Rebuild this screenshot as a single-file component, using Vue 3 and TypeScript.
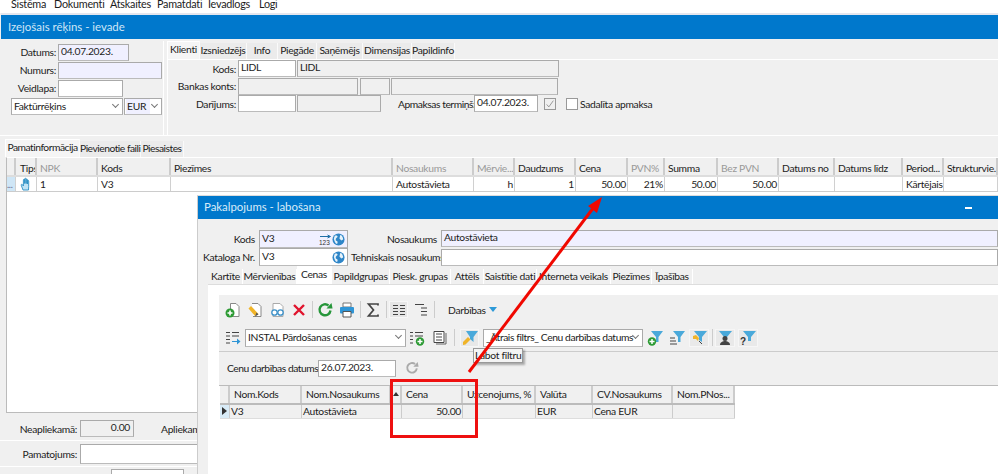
<script setup lang="ts">
type Col = { t: string; w: number; dim?: boolean; v?: string; r?: boolean }
const menu = [['Sistēma', 43], ['Dokumenti', 56], ['Atskaites', 47], ['Pamatdati', 51], ['Ievadlogs', 51], ['Logi', 30]] as const
const topTabs = [['Klienti', 33], ['Izsniedzējs', 47], ['Info', 31], ['Piegāde', 39], ['Saņēmējs', 46], ['Dimensijas', 49], ['Papildinfo', 43]] as const
const midTabs = [['Pamatinformācija', 75], ['Pievienotie faili', 61], ['Piesaistes', 43]] as const
const dlgTabs = [['Kartīte', 34], ['Mērvienības', 54], ['Cenas', 35], ['Papildgrupas', 58], ['Piesk. grupas', 61], ['Attēls', 33], ['Saistītie dati', 53], ['Interneta veikals', 74], ['Piezīmes', 41], ['Īpašības', 41]] as const
const mainCols: Col[] = [
  { t: 'NPK', w: 61, dim: true, v: '1' },
  { t: 'Kods', w: 73, v: 'V3' },
  { t: 'Piezīmes', w: 222, v: '' },
  { t: 'Nosaukums', w: 81, dim: true, v: 'Autostāvieta' },
  { t: 'Mērvie...', w: 41, dim: true, v: 'h', r: true },
  { t: 'Daudzums', w: 61, v: '1', r: true },
  { t: 'Cena', w: 52, v: '50.00', r: true },
  { t: 'PVN%', w: 37, dim: true, v: '21%', r: true },
  { t: 'Summa', w: 53, v: '50.00', r: true },
  { t: 'Bez PVN', w: 61, dim: true, v: '50.00', r: true },
  { t: 'Datums no', w: 56, v: '' },
  { t: 'Datums līdz', w: 68, v: '' },
  { t: 'Period...', w: 41, v: 'Kārtējais', r: true },
  { t: 'Strukturvie...', w: 54, v: '' },
]
const priceCols: Col[] = [
  { t: 'Nom.Kods', w: 72, v: 'V3' },
  { t: 'Nom.Nosaukums', w: 89, v: 'Autostāvieta' },
  { t: '', w: 11, v: '' },
  { t: 'Cena', w: 61, v: '50.00', r: true },
  { t: 'Uzcenojums, %', w: 73, v: '' },
  { t: 'Valūta', w: 57, v: 'EUR' },
  { t: 'CV.Nosaukums', w: 80, v: 'Cena EUR' },
  { t: 'Nom.PNos...', w: 62, v: '' },
]
const mainTemplate = '9px 21px ' + mainCols.map(c => c.w + 'px').join(' ')
const priceTemplate = '10px ' + priceCols.map(c => c.w + 'px').join(' ')
</script>

<template>
  <div class="app">
    <nav class="menubar"><span v-for="m in menu" :key="m[0]" :style="{ width: m[1] + 'px' }">{{ m[0] }}</span></nav>
    <header class="title">Izejošais rēķins - ievade</header>

    <section class="head">
      <div class="left-form">
        <label class="lbl">Datums:</label><div class="fld lav w71">04.07.2023.</div>
        <label class="lbl">Numurs:</label><div class="fld lav w104"></div>
        <label class="lbl">Veidlapa:</label><div class="fld w65"></div>
        <div class="selects">
          <div class="fld sel wsel">Faktūrrēķins<i class="chev"></i></div>
          <div class="fld sel weur"><b>EUR</b><i class="chev"></i></div>
        </div>
      </div>
      <div class="client">
        <div class="tabs top-tabs">
          <span v-for="(t, i) in topTabs" :key="t[0]" class="tab" :class="{ on: i === 0 }" :style="{ width: t[1] + 'px' }">{{ t[0] }}</span>
        </div>
        <div class="client-body">
          <div class="crow"><label class="lbl cl">Kods:</label><div class="fld w58">LIDL</div><div class="fld gray w262">LIDL</div></div>
          <div class="crow"><label class="lbl cl">Bankas konts:</label><div class="fld gray w120"></div><div class="fld gray w30 ml2"></div><div class="fld gray w167"></div></div>
          <div class="crow"><label class="lbl cl">Darījums:</label><div class="fld w58"></div><div class="fld gray w84"></div>
            <label class="lbl term">Apmaksas termiņš:</label><div class="fld w64">04.07.2023.</div>
            <span class="check on"><svg viewBox="0 0 12 12" width="10" height="10"><path d="M2 6.500l2.600 3L10 2" fill="none" stroke="#888" stroke-width="1"/></svg></span>
            <span class="check plain"></span><span class="chk-l">Sadalīta apmaksa</span>
          </div>
        </div>
      </div>
    </section>

    <div class="tabs mid-tabs">
      <span v-for="(t, i) in midTabs" :key="t[0]" class="tab" :class="{ on: i === 0 }" :style="{ width: t[1] + 'px' }">{{ t[0] }}</span>
    </div>

    <section class="main-grid">
      <div class="grow hdr" :style="{ gridTemplateColumns: mainTemplate }">
        <span class="gc"></span><span class="gc tips">Tips</span>
        <span v-for="c in mainCols" :key="c.t" class="gc" :class="{ dim: c.dim }">{{ c.t }}</span>
      </div>
      <div class="grow rowd" :style="{ gridTemplateColumns: mainTemplate }">
        <span class="gc mark">...</span>
        <span class="gc hand"><svg viewBox="0 0 12 14" width="12" height="14"><path d="M3 13L1.200 8.200c-.3-.9.8-1.300 1.300-.5L3.400 9V3c0-1 1.300-1 1.300 0V6.500V2c0-1 1.400-1 1.400 0v4.500V2.700c0-1 1.300-1 1.300 0V7V4c0-1 1.300-1 1.300 0v5.500L8.500 13z" fill="#bfe3f5" stroke="#2b8fc4" stroke-width=".9"/></svg></span>
        <span v-for="c in mainCols" :key="c.t" class="gc" :class="{ r: c.r }">{{ c.v }}</span>
      </div>
    </section>

    <section class="bottom">
      <div class="brow one">
        <label class="lbl l77">Neapliekamā:</label><div class="fld gray num">0.00</div><label class="lbl apl">Apliekamā</label>
      </div>
      <div class="brow two"><label class="lbl l77">Pamatojums:</label><div class="fld w118h"></div></div>
      <div class="brow three"><div class="fld w73"></div></div>
    </section>

    <!-- floating window over the form -->
    <section class="dialog">
      <header class="dlg-title"><span>Pakalpojums - labošana</span><i class="min"></i></header>
      <div class="dlg-form">
        <div class="drow r1">
          <label class="lbl d58">Kods</label>
          <div class="fld lav dk">V3
            <svg class="i123" viewBox="0 0 12 12" width="12" height="12"><path d="M1 2.500h10M8.500 1l3 1.500-3 1.500" fill="none" stroke="#1f6fa8" stroke-width="1"/><text x="0" y="11" font-size="6.500" font-family="Liberation Sans" fill="#333">123</text></svg>
            <svg class="globe" viewBox="0 0 14 14" width="13" height="13"><circle cx="7" cy="7" r="6.500" fill="#2f86c8"/><path d="M3 3c2-1 3 0 3 1s-2 1-2 3 2 1 2 3-1 2-2 1-2-4-2-5zM9 2c2 1 3 3 3 5l-2 1-2-2z" fill="#e6f2fa"/></svg>
          </div>
          <label class="lbl nos">Nosaukums</label><div class="fld lav dn">Autostāvieta</div>
        </div>
        <div class="drow r2">
          <label class="lbl d58">Kataloga Nr.</label>
          <div class="fld dk">V3
            <svg class="globe" viewBox="0 0 14 14" width="13" height="13"><circle cx="7" cy="7" r="6.500" fill="#2f86c8"/><path d="M3 3c2-1 3 0 3 1s-2 1-2 3 2 1 2 3-1 2-2 1-2-4-2-5zM9 2c2 1 3 3 3 5l-2 1-2-2z" fill="#e6f2fa"/></svg>
          </div>
          <label class="lbl nos">Tehniskais nosaukums</label><div class="fld dn"></div>
        </div>
      </div>
      <div class="tabs dlg-tabs">
        <span v-for="(t, i) in dlgTabs" :key="t[0]" class="tab" :class="{ onw: i === 2 }" :style="{ width: t[1] + 'px' }">{{ t[0] }}</span>
      </div>
      <div class="dlg-page">
        <div class="price-panel">
          <div class="tb tb1">
            <svg class="ic" viewBox="0 0 16 16"><path d="M5.500 8V1.500h5.500l3 3v10H8" fill="#fff" stroke="#888"/><circle cx="5" cy="11" r="4.500" fill="#2e9b35"/><path d="M5 8.500v5M2.500 11h5" stroke="#fff" stroke-width="1.600"/></svg>
            <svg class="ic" viewBox="0 0 16 16"><path d="M5 1.500h6l3 3v10H6" fill="#fff" stroke="#888"/><path d="M1.500 6.500l2.500-2.500 7.500 8-3.500 2z" fill="#f0b429"/><path d="M8 14.500l3.500-2-2-2z" fill="#555"/></svg>
            <svg class="ic" viewBox="0 0 16 16"><path d="M4 1.500h7l3 3v10H4z" fill="#fff" stroke="#aaa"/><circle cx="5.500" cy="10.500" r="2.700" fill="#fff" stroke="#3a8fc7" stroke-width="1.300"/><circle cx="11.500" cy="10.500" r="2.700" fill="#fff" stroke="#3a8fc7" stroke-width="1.300"/></svg>
            <svg class="ic" viewBox="0 0 16 16"><path d="M3 3l10 10M13 3L3 13" stroke="#e0142d" stroke-width="2.400"/></svg>
            <i class="sep"></i>
            <svg class="ic" viewBox="0 0 16 16"><path d="M13.500 8.500A5.500 5.500 0 1 1 11.500 3.500" fill="none" stroke="#26963a" stroke-width="2.400"/><path d="M9.500 6.500h6l-1-5.500z" fill="#26963a"/></svg>
            <svg class="ic" viewBox="0 0 16 16"><path d="M4 1h8v4H4z" fill="#fff" stroke="#777"/><rect x="1" y="5" width="14" height="6.500" rx="1" fill="#2f95d6"/><path d="M4 9.500h8V15H4z" fill="#fff" stroke="#555"/></svg>
            <i class="sep"></i>
            <svg class="ic" viewBox="0 0 16 16"><path d="M13 3.500V2H3.500L8.500 8l-5 6H13v-1.500" fill="none" stroke="#444" stroke-width="1.700"/></svg>
            <i class="sep"></i>
            <span class="tbtn"><svg viewBox="0 0 14 12" width="14" height="12"><path d="M1 1.500h5M8 1.500h5M1 4.500h5M8 4.500h5M1 7.500h5M8 7.500h5M1 10.500h5M8 10.500h5" stroke="#444"/></svg></span>
            <svg class="ic" viewBox="0 0 16 16"><path d="M2 2.500h9M8 6h6M8 9.500h6M8 13h6" stroke="#444" stroke-width="1.200"/></svg>
            <i class="sep"></i>
            <span class="act">Darbības</span><i class="tri"></i>
          </div>
          <div class="tb tb2">
            <svg class="ic" viewBox="0 0 16 16"><path d="M1 2.500h4M7 2.500h7M1 6h4M7 6h7M1 9.500h4M1 13h4" stroke="#444"/><path d="M7 11h5V8.500l3.500 3-3.500 3V12H7z" fill="#2f95d6"/></svg>
            <div class="fld sel s161">INSTAL Pārdošanas cenas<i class="chev"></i></div>
            <svg class="ic gap-a" viewBox="0 0 16 16"><path d="M1 2.500h3M6 2.500h8M1 6h3M6 6h8M1 9.500h3M1 13h3" stroke="#444"/><circle cx="11" cy="11.500" r="4.200" fill="#2e9b35"/><path d="M11 9v5M8.500 11.500h5" stroke="#fff" stroke-width="1.500"/></svg>
            <svg class="ic" viewBox="0 0 16 16"><path d="M2 1.500h10v11H2z" fill="#fff" stroke="#444"/><path d="M4 4h6M4 7h6M4 10h6" stroke="#444"/><path d="M14 3v11H4" fill="none" stroke="#666"/></svg>
            <i class="sep s2"></i>
            <span class="fbtn">
              <svg viewBox="0 0 16 16" width="16" height="16"><path d="M4 1h12l-4.500 6v5L8 9V7z" fill="#4aa9da"/><path d="M1 12l5-5 2.500 2.500-5 5L1 15z" fill="#f0b429"/></svg>
            </span>
            <div class="fld sel s160">_Ātrais filtrs_ Cenu darbības datums<i class="chev"></i></div>
            <svg class="ic f1" viewBox="0 0 16 16"><path d="M4 1h12l-4.500 6v5H9V7z" fill="#4aa9da"/><circle cx="5" cy="11.500" r="4.200" fill="#2e9b35"/><path d="M5 9v5M2.500 11.500h5" stroke="#fff" stroke-width="1.500"/></svg>
            <svg class="ic f2" viewBox="0 0 16 16"><path d="M4 1h12l-4.500 6v5H9V7z" fill="#4aa9da"/><path d="M1 8h5M1 11h6M1 14h7" stroke="#444"/></svg>
            <span class="tfb"><svg viewBox="0 0 16 16" width="16" height="16"><path d="M3 1h13l-5 6v5l-3-2V7z" fill="#4aa9da"/><path d="M2 6l3-1 3 3-1 3-2-2-3 0z" fill="#f0b429"/><path d="M8 11l3 3" stroke="#444"/></svg></span>
            <i class="sep s3"></i>
            <span class="tfb"><svg viewBox="0 0 16 16" width="16" height="16"><path d="M2 1h13l-5 6H7z" fill="#4aa9da"/><circle cx="8" cy="8.500" r="2.500" fill="#444"/><path d="M3 15c0-3 3-4 5-4s5 1 5 4z" fill="#444"/></svg></span>
            <span class="tfb"><svg viewBox="0 0 16 16" width="16" height="16"><path d="M3 1h13l-5 6v4H8V7z" fill="#4aa9da"/><text x="0" y="15" font-size="10" font-family="Liberation Sans" font-weight="700" fill="#333">?</text></svg></span>
          </div>
          <div class="date-row">
            <label class="lbl dl">Cenu darbības datums</label>
            <div class="fld w78">26.07.2023.</div>
            <svg class="ref" viewBox="0 0 16 16" width="14" height="14"><path d="M13.500 8.500A5.500 5.500 0 1 1 11.500 3.500" fill="none" stroke="#aaa" stroke-width="2.200"/><path d="M9.500 6.500h6l-1-5.500z" fill="#aaa"/></svg>
          </div>
        </div>
        <div class="price-grid">
          <div class="pwrap">
            <div class="prow phdr" :style="{ gridTemplateColumns: priceTemplate }">
              <span class="pc"></span>
              <span v-for="(c, i) in priceCols" :key="i" class="pc"><i v-if="i === 2" class="sort"></i>{{ c.t }}</span>
            </div>
            <div class="prow pdata" :style="{ gridTemplateColumns: priceTemplate }">
              <span class="pc pmark"><i class="rowtri"></i></span>
              <span v-for="(c, i) in priceCols" :key="i" class="pc" :class="{ r: c.r }">{{ c.v }}</span>
            </div>
          </div>
        </div>
      </div>
    </section>

    <div class="tooltip">Labot filtru</div>

    <!-- annotation drawn on top of the screenshot -->
    <div class="red-box"></div>
    <svg class="arrow" viewBox="0 0 998 474" width="998" height="474">
      <path d="M469 372L594 207" stroke="#f00800" stroke-width="3" fill="none"/>
      <path d="M602 197L597 213 588 206z" fill="#f00800"/>
    </svg>
  </div>
</template>

<style>
html, body { margin: 0; background: #f0f0f0; overflow: hidden; }
</style>

<style scoped>
.app { position: relative; width: 998px; height: 474px; overflow: hidden; background: #f0f0f0; color: #1c1c1c; font: 10.3px/14px Lato, "Liberation Sans", sans-serif; letter-spacing: -.3px; }
.app * { box-sizing: border-box; }
.menubar { height: 13px; background: #fff; display: flex; padding-left: 11px; line-height: 8px; overflow: hidden; font-size: 10.8px; letter-spacing: -.25px; }
.menubar span { flex: none; }
.title { height: 26px; margin-left: 1px; border-top: 2px solid #e4e6ee; background: #0078cc; background-clip: padding-box; color: #cfe6f6; padding-left: 7px; font-size: 11.4px; line-height: 23px; letter-spacing: 0; }
.lbl { text-align: right; white-space: nowrap; }
.fld { height: 17px; border: 1px solid #aaa; border-bottom-color: #bbb; background: #fff; padding: 0 0 0 2px; line-height: 13px; white-space: nowrap; overflow: hidden; position: relative; flex: none; }
.lav { background: #f0f0ff; }
.gray { background: #f0f0f0; }
.head { height: 97px; display: flex; border-bottom: 1px solid #fff; }
.left-form { width: 163px; display: grid; grid-template-columns: 56px 1fr; column-gap: 2px; grid-auto-rows: 18px; padding-top: 5px; align-content: start; }
.left-form .lbl { line-height: 17px; }
.w71 { width: 71px; } .w104 { width: 104px; } .w65 { width: 65px; }
.selects { grid-column: 1 / 3; display: flex; padding-left: 11px; gap: 1px; }
.sel { padding-left: 2px; line-height: 14px; }
.wsel { width: 112px; } .weur { width: 38px; }
.weur b { font-weight: 400; background: #f0f0ff; display: inline-block; width: 24px; margin-left: -1px; padding-left: 1px; height: 15px; }
.chev { position: absolute; right: 4px; top: 3px; width: 5px; height: 5px; border-right: 1px solid #777; border-bottom: 1px solid #777; transform: rotate(45deg); }
.client { flex: 1; border-left: 1px solid #fff; margin-top: 2px; padding-left: 3px; display: flex; flex-direction: column; }
.tabs { display: flex; align-items: flex-end; }
.tab { height: 16px; background: #ebebeb; border-right: 1px solid #fafafa; text-align: center; line-height: 15px; white-space: nowrap; flex: none; }
.tab.on { height: 18px; background: #f5f5f5; border-top: 1px solid #fff; border-left: 1px solid #fff; }
.top-tabs { height: 18px; }
.client-body { flex: 1; border-top: 1px solid #fff; border-left: 1px solid #fff; }
.crow { display: flex; height: 17.500px; align-items: center; }
.cl { width: 68px; margin-right: 2px; }
.w58 { width: 58px; } .w262 { width: 262px; margin-left: 1px; } .w120 { width: 120px; } .w30 { width: 30px; margin-right: 1px; } .ml2 { margin-left: 2px; } .w167 { width: 167px; } .w84 { width: 84px; margin-left: 1px; } .w64 { width: 64px; height: 17px; }
.term { margin-left: 17px; width: 74px; margin-right: 2px; letter-spacing: -.45px; }
.check { width: 12px; height: 12px; border: 1px solid #999; flex: none; display: flex; align-items: center; justify-content: center; }
.check.on { margin-left: 6px; }
.check.plain { margin-left: 10px; background: #fff; }
.chk-l { margin-left: 2px; }
.mid-tabs { height: 21px; padding-left: 5px; letter-spacing: -.5px; }
.mid-tabs .tab { height: 16px; }
.mid-tabs .tab.on { height: 18px; }
.main-grid { height: 256px; margin-left: 6px; border-top: 1px solid #fff; border-left: 1px solid #bbb; border-bottom: 1px solid #bbb; background: #fff; }
.grow { display: grid; }
.hdr { height: 19px; background: #f0f0f0; border-bottom: 2px solid #ddd; }
.rowd { height: 15px; border-bottom: 1px solid #ccc; }
.gc { padding: 0 3px; white-space: nowrap; overflow: hidden; border-right: 1px solid #d0d0d0; line-height: 15px; }
.hdr .gc { line-height: 20px; border-right: 2px solid #ccc; }
.gc.tips { padding: 0 0 0 4px; }
.gc.dim { color: #999; }
.gc.r { text-align: right; padding-right: 1px; }
.gc.mark { background: #cfe6f6; color: #668; padding: 0; font-size: 9px; line-height: 16px; }
.gc.hand { padding: 0 0 0 4px; line-height: 0; }
.brow { display: flex; align-items: center; }
.one { height: 28px; border-bottom: 1px solid #fff; width: 197px; overflow: hidden; padding-top: 4px; }
.two { height: 26px; border-bottom: 1px solid #fff; width: 197px; }
.three { height: 10px; padding-left: 111px; align-items: flex-start; padding-top: 2px; }
.l77 { width: 77px; margin-right: 3px; flex: none; }
.num { width: 54px; text-align: right; padding-right: 3px; margin-right: 27px; }
.apl { flex: none; }
.w118h { width: 118px; height: 20px; }
.w73 { width: 73px; }
.dialog { position: absolute; left: 197px; top: 195px; width: 801px; height: 279px; background: #f0f0f0; border-left: 1px solid #ccc; border-top: 1px solid #ddd; display: flex; flex-direction: column; }
.dlg-title { height: 23px; background: #0078cc; color: #d9ecf9; font-size: 11.4px; line-height: 22px; padding-left: 6px; position: relative; flex: none; letter-spacing: 0; }
.min { position: absolute; right: 26px; top: 11px; width: 7px; height: 1.500px; background: #fff; }
.dlg-form { height: 49px; padding-top: 10px; flex: none; }
.drow { display: flex; align-items: center; }
.r1 { height: 19px; } .r2 { height: 18px; }
.d58 { width: 57px; margin-right: 4px; flex: none; }
.dk { width: 89px; height: 18px; line-height: 14px; }
.nos { width: 86px; margin: 0 4px 0 3px; flex: none; }
.dn { flex: 1; height: 17px; }
.i123 { position: absolute; left: 59px; top: 3px; letter-spacing: 0; }
.globe { position: absolute; right: 2px; top: 2px; }
.dlg-tabs { height: 17px; padding-left: 11px; flex: none; margin-top: -1px; }
.dlg-tabs .tab { background: #f0f0f0; border-right: 1px solid #fff; height: 15px; line-height: 14px; }
.dlg-tabs .tab.onw { background: #fff; height: 18px; line-height: 17px; }
.dlg-page { flex: 1; margin-left: 10px; background: #fff; border-top: 1px solid #ddd; padding: 10px 0 0 11px; display: flex; flex-direction: column; }
.price-panel { height: 90px; background: #f0f0f0; flex: none; }
.tb { display: flex; align-items: center; }
.tb1 { height: 29px; padding: 0 0 0 6px; }
.tb2 { height: 28px; padding: 0 0 0 6px; border-bottom: 1px solid #ccc; }
.ic { width: 16px; height: 16px; flex: none; margin-right: 6px; }
.sep { width: 1px; height: 17px; background: #ccc; margin: 0 4px 0 -1px; flex: none; }
.tbtn { width: 19px; height: 17px; background: #e6e6e6; border: 1px solid #f6f6f6; display: flex; align-items: center; justify-content: center; margin: 0 5px 0 -2px; }
.act { margin-left: 9px; }
.tri { width: 0; height: 0; border: 4px solid transparent; border-top: 5px solid #2d9ad8; border-bottom: 0; margin-left: 3px; }
.s161 { width: 161px; margin: 0 3px 0 -2px; height: 18px; }
.gap-a { margin-right: 7px; }
.s2 { margin: 0 5px 0 0; }
.fbtn { width: 19px; height: 18px; background: #e8e8e8; border: 1px solid #f6f6f6; flex: none; display: flex; align-items: center; justify-content: center; margin-right: 4px; }
.s160 { width: 160px; height: 18px; margin-right: 4px; letter-spacing: -.4px; }
.f1 { margin-right: 6px; }
.f2 { margin-right: 4px; }
.tfb { width: 20px; height: 18px; background: #e9e9e9; border: 1px solid #f6f6f6; flex: none; display: flex; align-items: center; justify-content: center; margin-right: 3px; }
.s3 { margin: 0 2px 0 0; }
.date-row { display: flex; align-items: center; height: 32px; padding-left: 8px; }
.dl { width: 88px; margin-right: 3px; text-align: left; letter-spacing: -.45px; }
.w78 { width: 78px; height: 17px; }
.ref { margin-left: 9px; }
.price-grid { flex: 1; background: #fff; border-top: 1px solid #bbb; padding-left: 1px; }
.pwrap { width: 515px; }
.prow { display: grid; }
.phdr { height: 19px; background: #f0f0f0; border-bottom: 2px solid #bbb; }
.pdata { height: 14px; background: #f0f0f0; border-bottom: 1px solid #ddd; }
.pc { border-right: 1px solid #ccc; padding: 0 3px 0 1px; line-height: 12px; white-space: nowrap; overflow: hidden; position: relative; }
.phdr .pc { padding: 0 4px; line-height: 16px; border-right: 2px solid #ccc; }
.pc.r { text-align: right; padding-right: 1px; }
.pmark { background: #d8ebf7; padding: 0; }
.rowtri { position: absolute; left: 2px; top: 2px; width: 0; height: 0; border: 4px solid transparent; border-left: 5px solid #333; border-right: 0; }
.sort { position: absolute; left: 2px; top: 6px; width: 0; height: 0; border: 3.500px solid transparent; border-bottom: 4px solid #333; border-top: 0; }
.tooltip { position: absolute; left: 473px; top: 348px; width: 50px; height: 15px; background: #f4f4f4; border: 1px solid #999; box-shadow: 2px 2px 2px rgba(0,0,0,.3); line-height: 13px; padding-left: 1px; white-space: nowrap; }
.red-box { position: absolute; left: 390px; top: 379px; width: 88px; height: 59px; border: 3px solid #ee1010; }
.arrow { position: absolute; left: 0; top: 0; pointer-events: none; }
</style>
